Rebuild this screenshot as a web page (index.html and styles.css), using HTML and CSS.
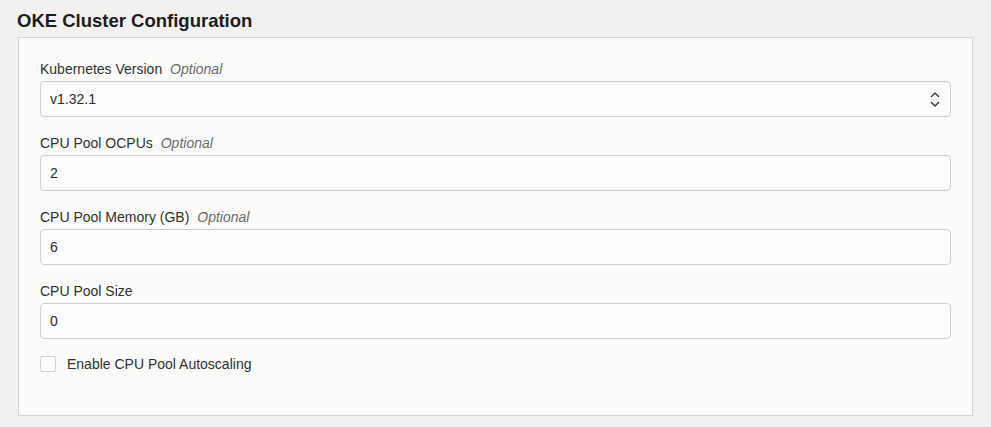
FILE: index.html
```html
<!DOCTYPE html>
<html lang="en">
<head>
<meta charset="utf-8">
<title>OKE Cluster Configuration</title>
<link rel="stylesheet" href="styles.css">
</head>
<body>
<h2 class="title">OKE Cluster Configuration</h2>
<section class="panel">
  <div class="field">
    <label class="label">Kubernetes Version <em class="opt">Optional</em></label>
    <div class="input select">
      <span>v1.32.1</span>
      <svg class="chev" width="10" height="17" viewBox="0 0 10 17"><path d="M1.5 5.5 L5 2 L8.5 5.5 M1.5 11.5 L5 15 L8.5 11.5" fill="none" stroke="#333" stroke-width="1.4" stroke-linecap="round" stroke-linejoin="round"/></svg>
    </div>
  </div>
  <div class="field">
    <label class="label">CPU Pool OCPUs <em class="opt">Optional</em></label>
    <div class="input"><span>2</span></div>
  </div>
  <div class="field">
    <label class="label">CPU Pool Memory (GB) <em class="opt">Optional</em></label>
    <div class="input"><span>6</span></div>
  </div>
  <div class="field">
    <label class="label">CPU Pool Size</label>
    <div class="input"><span>0</span></div>
  </div>
  <div class="check">
    <span class="box"></span>
    <span class="check-text">Enable CPU Pool Autoscaling</span>
  </div>
</section>
</body>
</html>
```
FILE: styles.css
```css
html, body {
  margin: 0;
  padding: 0;
}
body {
  background: #f2f1ef;
  font-family: "Liberation Sans", Arial, sans-serif;
  color: #2a2a2a;
  width: 991px;
  height: 427px;
  overflow: hidden;
}
.title {
  margin: 0;
  padding: 10px 0 0 17px;
  font-size: 18.5px;
  line-height: 22px;
  font-weight: bold;
  color: #1c1c1c;
  height: 27px;
}
.panel {
  margin-left: 18px;
  width: 911px;
  height: 334px;
  background: #fcfcfb;
  border: 1px solid #d6d5d3;
  padding: 22px 21px 21px 21px;
  display: flex;
  flex-direction: column;
}
.field {
  display: flex;
  flex-direction: column;
  gap: 2px;
  margin-bottom: 17px;
}
.label {
  font-size: 14px;
  line-height: 19px;
  color: #2f2f2f;
}
.opt {
  font-style: italic;
  color: #6a6a6a;
  margin-left: 4px;
}
.input {
  height: 34px;
  border: 1px solid #cfcecc;
  border-radius: 4px;
  background: #fdfdfd;
  display: flex;
  align-items: center;
  justify-content: space-between;
  padding: 0 10px 0 9px;
  font-size: 14px;
  color: #2a2a2a;
}
.chev {
  display: block;
}
.check {
  display: flex;
  align-items: center;
  gap: 11px;
  height: 16px;
}
.box {
  width: 14px;
  height: 14px;
  border: 1px solid #cfcecc;
  border-radius: 3px;
  background: #fdfdfd;
}
.check-text {
  font-size: 14px;
  color: #2f2f2f;
}
```
